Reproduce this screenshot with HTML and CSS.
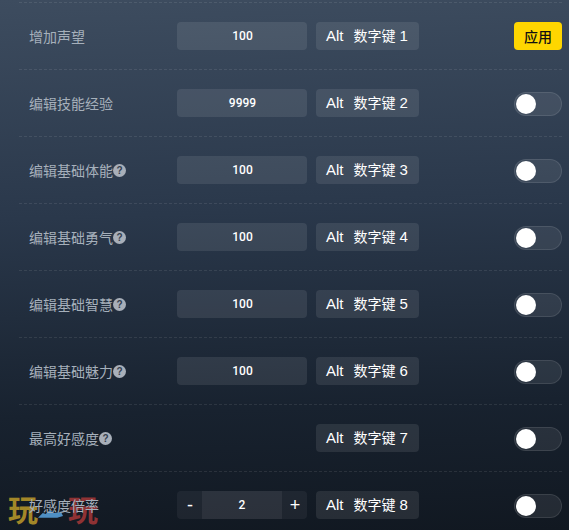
FILE: index.html
```html
<!DOCTYPE html>
<html lang="zh-CN">
<head>
<meta charset="utf-8">
<title>修改器</title>
<link rel="stylesheet" href="styles.css">
</head>
<body>
<div class="watermark" aria-hidden="true">
  <span class="wm-gold">玩</span>
  <svg class="wm-swoosh" viewBox="0 0 26 8" width="26" height="8"><path d="M0 8 L5 3 L8 4 L12 0 L17 3 L24 2 L26 6 L20 8 Z" fill="#4f8fc4"/></svg>
  <span class="wm-red">玩</span>
</div>
<main class="panel">
  <div class="row">
    <div class="label">增加声望</div>
    <div class="value">100</div>
    <div class="key"><span class="alt">Alt</span><span class="cn">数字键</span><span class="num">1</span></div>
    <button class="apply">应用</button>
  </div>
  <div class="row">
    <div class="label">编辑技能经验</div>
    <div class="value">9999</div>
    <div class="key"><span class="alt">Alt</span><span class="cn">数字键</span><span class="num">2</span></div>
    <div class="toggle"><span class="knob"></span></div>
  </div>
  <div class="row">
    <div class="label">编辑基础体能<span class="help">?</span></div>
    <div class="value">100</div>
    <div class="key"><span class="alt">Alt</span><span class="cn">数字键</span><span class="num">3</span></div>
    <div class="toggle"><span class="knob"></span></div>
  </div>
  <div class="row">
    <div class="label">编辑基础勇气<span class="help">?</span></div>
    <div class="value">100</div>
    <div class="key"><span class="alt">Alt</span><span class="cn">数字键</span><span class="num">4</span></div>
    <div class="toggle"><span class="knob"></span></div>
  </div>
  <div class="row">
    <div class="label">编辑基础智慧<span class="help">?</span></div>
    <div class="value">100</div>
    <div class="key"><span class="alt">Alt</span><span class="cn">数字键</span><span class="num">5</span></div>
    <div class="toggle"><span class="knob"></span></div>
  </div>
  <div class="row">
    <div class="label">编辑基础魅力<span class="help">?</span></div>
    <div class="value">100</div>
    <div class="key"><span class="alt">Alt</span><span class="cn">数字键</span><span class="num">6</span></div>
    <div class="toggle"><span class="knob"></span></div>
  </div>
  <div class="row">
    <div class="label">最高好感度<span class="help">?</span></div>
    <div class="spacer"></div>
    <div class="key"><span class="alt">Alt</span><span class="cn">数字键</span><span class="num">7</span></div>
    <div class="toggle"><span class="knob"></span></div>
  </div>
  <div class="row">
    <div class="label">好感度倍率</div>
    <div class="stepper"><span class="step minus">-</span><span class="step-value">2</span><span class="step plus">+</span></div>
    <div class="key"><span class="alt">Alt</span><span class="cn">数字键</span><span class="num">8</span></div>
    <div class="toggle"><span class="knob"></span></div>
  </div>
</main>
</body>
</html>
```
FILE: styles.css
```css
* { box-sizing: border-box; }
html, body { margin: 0; height: 100%; }
body {
  width: 569px;
  height: 530px;
  overflow: hidden;
  position: relative;
  background: linear-gradient(178deg, #3d4c5f 0%, #2a384b 40%, #18222f 76%, #111821 100%);
  font-family: "Liberation Sans", "Noto Sans CJK SC", sans-serif;
}
.panel { position: relative; padding: 2px 7px 0 19px; }
.row {
  height: 67px;
  display: flex;
  align-items: center;
  border-top: 1px dashed rgba(255, 255, 255, 0.09);
  padding-bottom: 1px;
}
.label {
  width: 158px;
  padding: 2px 0 0 10px;
  display: flex;
  align-items: center;
  font-size: 14px;
  line-height: 20px;
  color: #a6b0bb;
}
.help {
  width: 13px;
  height: 13px;
  border-radius: 50%;
  background: #a8afb9;
  color: #34404f;
  font-size: 10px;
  font-weight: 700;
  line-height: 13px;
  text-align: center;
}
.value {
  width: 130px;
  height: 28px;
  padding-left: 1px;
  border-radius: 4px;
  background: rgba(255, 255, 255, 0.09);
  color: #fff;
  font-family: "Roboto", "Liberation Sans", sans-serif;
  font-size: 12px;
  font-weight: 500;
  line-height: 28px;
  text-align: center;
}
.spacer { width: 130px; }
.stepper {
  width: 130px;
  height: 28px;
  display: flex;
  border-radius: 4px;
  overflow: hidden;
  background: rgba(255, 255, 255, 0.05);
  color: #fff;
  line-height: 28px;
  text-align: center;
}
.step { width: 25px; font-size: 18px; font-weight: 300; }
.minus { padding-left: 1px; }
.plus { padding-left: 1px; }
.step-value {
  flex: 1;
  background: rgba(255, 255, 255, 0.06);
  font-family: "Roboto", "Liberation Sans", sans-serif;
  font-size: 12px;
  font-weight: 500;
}
.key {
  width: 103px;
  height: 28px;
  margin-left: 9px;
  margin-right: 95px;
  padding-left: 10px;
  display: flex;
  align-items: center;
  border-radius: 4px;
  background: rgba(255, 255, 255, 0.09);
  color: #fff;
  font-size: 14px;
  line-height: 28px;
  white-space: nowrap;
}
.alt { font-size: 15px; margin-right: 10px; }
.num { margin-left: 4px; font-size: 15px; }
.apply {
  width: 48px;
  height: 28px;
  padding: 0;
  border: 0;
  border-radius: 4px;
  background: #ffd600;
  color: #111;
  font-family: inherit;
  font-size: 14px;
  font-weight: 500;
}
.toggle {
  width: 48px;
  height: 24px;
  padding: 1px;
  border: 1px solid rgba(255, 255, 255, 0.1);
  border-radius: 12px;
  background: rgba(255, 255, 255, 0.08);
  margin-top: 3px;
}
.knob {
  display: block;
  width: 20px;
  height: 20px;
  border-radius: 50%;
  background: #fff;
}
.watermark {
  position: absolute;
  left: 8px;
  top: 490px;
  width: 92px;
  height: 36px;
  display: flex;
  align-items: center;
  font-family: "Noto Sans CJK SC", sans-serif;
  font-size: 30px;
  font-weight: 700;
  line-height: 36px;
  pointer-events: none;
}
.wm-gold { color: #a38728; }
.wm-red { color: #8f3234; margin-left: 5px; }
.wm-swoosh { margin: 12px 0 0 0; flex: none; width: 25px; }
```
